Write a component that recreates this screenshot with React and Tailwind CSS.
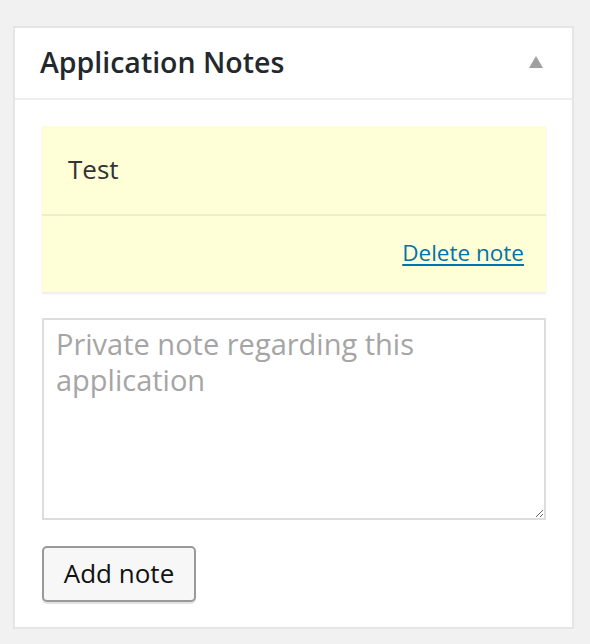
import React from "react";

export default function App() {
  return (
    <div className="min-h-[644px] w-[590px] bg-[#f1f1f1] pt-[26px] pl-[13px] font-['Open_Sans',sans-serif]">
      <div className="w-[561px] border-2 border-[#e5e5e5] bg-white">
        <div className="flex h-[72px] items-center justify-between border-b-2 border-[#eeeeee] pl-[25px] pr-[29px]">
          <h2 className="text-[28.5px] font-semibold leading-none text-[#23282d] -mt-[2px]">Application Notes</h2>
          <svg width="14" height="12" viewBox="0 0 14 12" className="-mt-[2px]">
            <polygon points="7,0 14,12 0,12" fill="#a0a0a0" />
          </svg>
        </div>
        <div className="pl-[27px] pr-[26px] pt-[26px] pb-[25px]">
          <div className="bg-[#fefed7] shadow-[0_2px_2px_rgba(0,0,0,0.08)]">
            <div className="h-[90px] border-b-2 border-[#eeeecc] pl-[26px] pt-[25px] text-[26px] leading-[1.4] text-[#333333]">
              Test
            </div>
            <div className="flex h-[76px] justify-end pr-[22px] pt-[21px]">
              <a href="#" className="text-[22.5px] leading-[1.4] text-[#0073aa] underline decoration-2 underline-offset-[3px]">
                Delete note
              </a>
            </div>
          </div>
          <textarea
            placeholder="Private note regarding this application"
            className="mt-[26px] block h-[202px] w-[504px] resize-y border-2 border-[#dddddd] bg-white pl-[12px] pr-[20px] pt-[6px] text-[29px] leading-[1.25] text-[#333] placeholder:text-[#a5a5a5] outline-none"
          />
          <button className="mt-[26px] flex h-[56px] w-[154px] items-center justify-center rounded-[5px] border-2 border-[#999999] bg-[#f7f7f7] pb-[2px] text-[26px] text-[#111] shadow-[0_2px_0_#e2e2e2]">
            Add note
          </button>
        </div>
      </div>
    </div>
  );
}
